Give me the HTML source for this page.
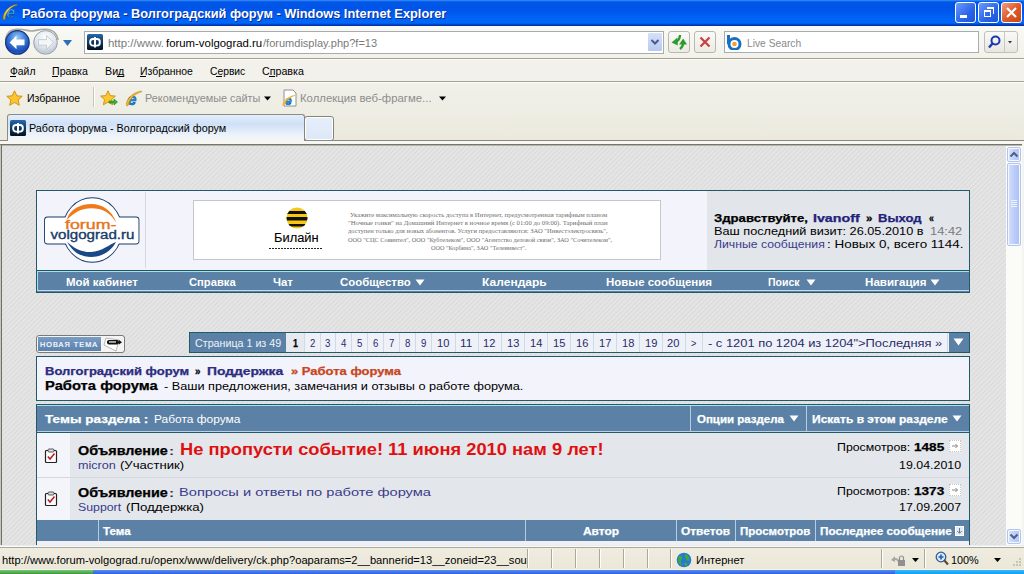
<!DOCTYPE html><html><head><meta charset="utf-8"><style>
html,body{margin:0;padding:0;width:1024px;height:574px;overflow:hidden;position:relative;background:#ece9d8;font-family:'Liberation Sans',sans-serif}
div{box-sizing:border-box}
.a{position:absolute}
</style></head><body>

<div class=a style="left:0px;top:0px;width:1024px;height:26px;background:linear-gradient(#3d95ff 0px,#1a6df0 1px,#0058e6 2px,#0053e8 7px,#0058ee 12px,#0063f5 18px,#0068f8 23px,#0050dc 24px,#0038b8 25px,#0030a8 26px)"></div>
<svg class=a style="left:0px;top:0px" width="20" height="22" viewBox="0 0 20 22">
<defs><linearGradient id="ieg" x1="0" y1="0" x2="0" y2="1"><stop offset="0" stop-color="#9ee8ff"/><stop offset="0.5" stop-color="#3aa8f0"/><stop offset="1" stop-color="#1a78d8"/></linearGradient>
<linearGradient id="iey" x1="0" y1="1" x2="1" y2="0"><stop offset="0" stop-color="#c89018"/><stop offset="0.5" stop-color="#f8e870"/><stop offset="1" stop-color="#d8a820"/></linearGradient></defs>
<text x="6.3" y="18" font-family="Liberation Sans" font-weight="bold" font-style="italic" font-size="16" fill="url(#ieg)" stroke="#0a4a98" stroke-width="0.6">e</text>
<path d="M3.2 19.5 C1.5 15 7.5 5.5 17 4.2 C17.5 4.8 17 5.5 16 5.6 C9 7.5 5.5 14 5.2 19 C4.8 20 3.8 20.2 3.2 19.5Z" fill="url(#iey)" stroke="#7a6010" stroke-width="0.5"/>
</svg>
<div style="position:absolute;left:22.20px;top:7px;font:bold 13.5px 'Liberation Sans', sans-serif;line-height:13.5px;color:#fff;white-space:nowrap;transform-origin:0 0;transform:scaleX(0.9481);text-shadow:1px 1px 0 #0a2a90">Работа форума - Волгоградский форум - Windows Internet Explorer</div>
<div class=a style="left:955px;top:2px;width:21px;height:21px;border:1px solid #fff;border-radius:3px;background:linear-gradient(135deg,#6c9cff,#2a64e8 60%,#1f55d8)"></div>
<div class=a style="left:960px;top:15px;width:7px;height:3px;background:#fff"></div>
<div class=a style="left:978px;top:2px;width:21px;height:21px;border:1px solid #fff;border-radius:3px;background:linear-gradient(135deg,#6c9cff,#2a64e8 60%,#1f55d8)"></div>
<div class=a style="left:984px;top:10px;width:7px;height:7px;border:1.5px solid #fff;border-top-width:2px"></div>
<div class=a style="left:987px;top:7px;width:7px;height:7px;border:1.5px solid #fff;border-top-width:2px;border-left:none;border-bottom:none"></div>
<div class=a style="left:1001px;top:2px;width:21px;height:21px;border:1px solid #fff;border-radius:3px;background:linear-gradient(135deg,#f0a080,#e05a2a 50%,#c84818)"></div>
<svg class=a style="left:1001px;top:2px" width="21" height="21"><path d="M6 6 L15 15 M15 6 L6 15" stroke="#fff" stroke-width="2.2"/></svg>
<div class=a style="left:0px;top:26px;width:1024px;height:32px;background:linear-gradient(#fafaf6,#f2f1ea)"></div>
<div class=a style="left:0px;top:58px;width:1024px;height:1px;background:#a4a294"></div>
<div class=a style="left:0px;top:59px;width:1024px;height:1px;background:#fdfdf6"></div>
<div class=a style="left:0px;top:60px;width:1024px;height:21px;background:#f2f1eb"></div>
<div class=a style="left:0px;top:81px;width:1024px;height:1px;background:#a4a294"></div>
<div class=a style="left:0px;top:82px;width:1024px;height:1px;background:#fdfdf6"></div>
<div class=a style="left:0px;top:83px;width:1024px;height:61px;background:linear-gradient(#f1f0e9,#eeede3 50%,#ebe9dc)"></div>
<svg class=a style="left:0px;top:26px" width="80" height="32" viewBox="0 0 80 32">
<defs>
<radialGradient id="bg1" cx="0.5" cy="0.3" r="0.75"><stop offset="0" stop-color="#9ccaf8"/><stop offset="0.45" stop-color="#3a7ad8"/><stop offset="0.8" stop-color="#1a4ab8"/><stop offset="1" stop-color="#2a90e8"/></radialGradient>
<radialGradient id="bg2" cx="0.5" cy="0.3" r="0.75"><stop offset="0" stop-color="#ffffff"/><stop offset="0.55" stop-color="#dfe6ee"/><stop offset="0.85" stop-color="#c0c8d4"/><stop offset="1" stop-color="#d8f0fa"/></radialGradient>
</defs>
<path d="M5.5 14 C6.5 7 11 3.2 17.5 3.2 C25 3.2 28 5 31.5 5 C35 5 38 3.2 45.5 3.2 C52 3.2 57 7 58 14" fill="none" stroke="#a8a8a4" stroke-width="1.6"/>
<circle cx="17.4" cy="16.4" r="11.8" fill="url(#bg1)" stroke="#163478" stroke-width="1.2"/>
<path d="M9.5 16.4 L16.5 9.5 L16.5 13.6 L24.5 13.6 L24.5 19.2 L16.5 19.2 L16.5 23.3 Z" fill="#fff"/>
<circle cx="45.5" cy="16.4" r="11.8" fill="url(#bg2)" stroke="#9aa0a8" stroke-width="1"/>
<path d="M53.5 16.4 L46.5 9.5 L46.5 13.6 L38.5 13.6 L38.5 19.2 L46.5 19.2 L46.5 23.3 Z" fill="#f4f6f8" stroke="#b8bcc4" stroke-width="0.7"/>
<path d="M63 14 L72 14 L67.5 20 Z" fill="#2a70b8"/>
</svg>
<div class=a style="left:84px;top:31px;width:580px;height:23px;background:#fff;border:1px solid #a5acb2"></div>
<svg class=a style="left:87px;top:34px" width="16" height="16" viewBox="0 0 16 16"><defs><linearGradient id="fg" x1="0" y1="0" x2="0" y2="1"><stop offset="0" stop-color="#2a68a8"/><stop offset="0.5" stop-color="#0e3a66"/><stop offset="1" stop-color="#050e1a"/></linearGradient></defs><rect width="16" height="16" rx="1.5" fill="url(#fg)"/><rect x="3.2" y="5" width="9.6" height="6.6" rx="2.8" fill="none" stroke="#fff" stroke-width="1.9"/><rect x="7" y="3" width="2" height="10.5" fill="#fff"/></svg>
<div style="position:absolute;left:108.00px;top:38px;font:normal 11px 'Liberation Sans', sans-serif;line-height:11px;color:#7a7a7a;white-space:nowrap;transform-origin:0 0;transform:scaleX(1.0420);">http://www.</div>
<div style="position:absolute;left:166.00px;top:38px;font:normal 11px 'Liberation Sans', sans-serif;line-height:11px;color:#000;white-space:nowrap;transform-origin:0 0;transform:scaleX(1.0343);">forum-volgograd.ru</div>
<div style="position:absolute;left:263.00px;top:38px;font:normal 11px 'Liberation Sans', sans-serif;line-height:11px;color:#7a7a7a;white-space:nowrap;transform-origin:0 0;transform:scaleX(1.0024);">/forumdisplay.php?f=13</div>
<div class=a style="left:648px;top:33px;width:14px;height:18px;background:linear-gradient(#d6e0fa,#b8c8f0);border-radius:1px"></div>
<svg class=a style="left:648px;top:33px" width="14" height="18"><path d="M3.5 7 L7 10.5 L10.5 7" stroke="#4a5a8a" stroke-width="2" fill="none"/></svg>
<div class=a style="left:668px;top:31px;width:22px;height:22px;border:1px solid #b8b8b0;border-radius:3px;background:linear-gradient(#fafaf8,#eceae4)"></div>
<svg class=a style="left:668px;top:31px" width="22" height="22"><path d="M3.5 11.5 L9.5 6.5 L9.8 14.5Z" fill="#2c9c2c"/><path d="M8.5 10.5 Q11.5 9.5 12 4" stroke="#2c9c2c" stroke-width="2.4" fill="none"/><path d="M11 13.5 L19 13.5 L15.2 7.5Z" fill="#2c9c2c"/><path d="M15.2 12.5 Q14.8 16 12 18" stroke="#2c9c2c" stroke-width="2.4" fill="none"/></svg>
<div class=a style="left:694px;top:31px;width:22px;height:22px;border:1px solid #b8b8b0;border-radius:3px;background:linear-gradient(#fafaf8,#eceae4)"></div>
<svg class=a style="left:694px;top:31px" width="22" height="22"><path d="M6.5 6.5 L15.5 15.5 M15.5 6.5 L6.5 15.5" stroke="#c84040" stroke-width="2.2"/></svg>
<div class=a style="left:724px;top:31px;width:255px;height:22px;background:#fff;border:1px solid #a5acb2"></div>
<svg class=a style="left:726px;top:34px" width="18" height="16" viewBox="0 0 18 16"><path d="M2.5 1 V10" stroke="#1a70c0" stroke-width="3"/><circle cx="8.5" cy="10" r="5.5" fill="none" stroke="#1a70c0" stroke-width="3"/><circle cx="8.5" cy="10" r="2.3" fill="#f0a030"/></svg>
<div style="position:absolute;left:747.00px;top:38px;font:normal 11px 'Liberation Sans', sans-serif;line-height:11px;color:#8a8a8a;white-space:nowrap;transform-origin:0 0;transform:scaleX(0.9315);">Live Search</div>
<div class=a style="left:984px;top:31px;width:34px;height:22px;border:1px solid #c0c0b8;border-radius:3px;background:linear-gradient(#fafaf8,#e8e6e0)"></div>
<div class=a style="left:1004px;top:32px;width:1px;height:20px;background:#c8c8c0"></div>
<svg class=a style="left:984px;top:31px" width="34" height="22"><circle cx="11.5" cy="9.5" r="4" fill="none" stroke="#1a3ab0" stroke-width="2"/><path d="M9 12 L5 16.5" stroke="#1a3ab0" stroke-width="2.5"/><path d="M24 10 L28 10 L26 12.5Z" fill="#335"/></svg>
<div style="position:absolute;left:10.00px;top:66px;font:normal 10.5px 'Liberation Sans', sans-serif;line-height:10.5px;color:#000;white-space:nowrap;transform-origin:0 0;transform:scaleX(0.9849);">Файл</div>
<div style="position:absolute;left:51.80px;top:66px;font:normal 10.5px 'Liberation Sans', sans-serif;line-height:10.5px;color:#000;white-space:nowrap;transform-origin:0 0;transform:scaleX(1.0104);">Правка</div>
<div style="position:absolute;left:104.80px;top:66px;font:normal 10.5px 'Liberation Sans', sans-serif;line-height:10.5px;color:#000;white-space:nowrap;transform-origin:0 0;transform:scaleX(1.0176);">Вид</div>
<div style="position:absolute;left:139.80px;top:66px;font:normal 10.5px 'Liberation Sans', sans-serif;line-height:10.5px;color:#000;white-space:nowrap;transform-origin:0 0;transform:scaleX(0.9930);">Избранное</div>
<div style="position:absolute;left:209.70px;top:66px;font:normal 10.5px 'Liberation Sans', sans-serif;line-height:10.5px;color:#000;white-space:nowrap;transform-origin:0 0;transform:scaleX(0.9802);">Сервис</div>
<div style="position:absolute;left:261.80px;top:66px;font:normal 10.5px 'Liberation Sans', sans-serif;line-height:10.5px;color:#000;white-space:nowrap;transform-origin:0 0;transform:scaleX(1.0157);">Справка</div>
<div class=a style="left:10px;top:76px;width:6px;height:1px;background:#000"></div>
<div class=a style="left:52px;top:76px;width:6px;height:1px;background:#000"></div>
<div class=a style="left:117px;top:76px;width:7px;height:1px;background:#000"></div>
<div class=a style="left:140px;top:76px;width:6px;height:1px;background:#000"></div>
<div class=a style="left:216px;top:76px;width:6px;height:1px;background:#000"></div>
<div class=a style="left:269px;top:76px;width:6px;height:1px;background:#000"></div>
<svg class=a style="left:6px;top:90px" width="17" height="17" viewBox="0 0 17 17"><path d="M8.5 0.8 L10.8 5.8 L16.2 6.3 L12.1 9.9 L13.3 15.3 L8.5 12.5 L3.7 15.3 L4.9 9.9 L0.8 6.3 L6.2 5.8Z" fill="#fcc630" stroke="#d08a10" stroke-width="0.9"/></svg>
<div style="position:absolute;left:26.70px;top:93px;font:normal 10.5px 'Liberation Sans', sans-serif;line-height:10.5px;color:#000;white-space:nowrap;transform-origin:0 0;transform:scaleX(0.9986);">Избранное</div>
<div class=a style="left:93px;top:87px;width:1px;height:20px;background:#c8c4b4"></div>
<div class=a style="left:94px;top:87px;width:1px;height:20px;background:#fff"></div>
<svg class=a style="left:100px;top:90px" width="18" height="17" viewBox="0 0 18 17"><path d="M8 0.8 L10.2 5.6 L15.4 6.1 L11.5 9.6 L12.6 14.8 L8 12.1 L3.4 14.8 L4.5 9.6 L0.6 6.1 L5.8 5.6Z" fill="#fcc630" stroke="#d08a10" stroke-width="0.9"/><path d="M9 11 H14 V9 L17.5 12 L14 15 V13 H9Z" fill="#3ab030" stroke="#1a8a1a" stroke-width="0.6"/></svg>
<svg class=a style="left:125px;top:89px" width="18" height="18" viewBox="0 0 18 18"><text x="2.5" y="15.5" font-family="Liberation Sans" font-weight="bold" font-style="italic" font-size="16" fill="#2a98e8" stroke="#0a50a8" stroke-width="0.6">e</text><path d="M1.5 16.5 C0 12 7 3 16.5 2 C17 2.6 16.5 3.2 15.5 3.3 C9 5 4.5 11 3.4 16 C3 17 2 17.2 1.5 16.5Z" fill="#f0b828" stroke="#a07010" stroke-width="0.4"/></svg>
<div style="position:absolute;left:144.70px;top:93px;font:normal 10.5px 'Liberation Sans', sans-serif;line-height:10.5px;color:#8d8d8d;white-space:nowrap;transform-origin:0 0;transform:scaleX(1.0317);">Рекомендуемые сайты</div>
<svg class=a style="left:263px;top:96px" width="9" height="5"><path d="M1 0.5 L8 0.5 L4.5 4.5Z" fill="#000"/></svg>
<svg class=a style="left:281px;top:89px" width="17" height="18" viewBox="0 0 17 18"><path d="M3 1 H12 L15 4 V17 H3Z" fill="#fff" stroke="#909090" stroke-width="1"/><text x="4" y="15.5" font-family="Liberation Sans" font-weight="bold" font-style="italic" font-size="12" fill="#2a98e8" stroke="#0a50a8" stroke-width="0.5">e</text><path d="M1.5 16.5 C1 13 7 7 14 6 C14.3 6.5 14 7 13.3 7.1 C8 9 4.5 12.5 3 16.5 C2.6 17.2 1.8 17.2 1.5 16.5Z" fill="#f0b828"/></svg>
<div style="position:absolute;left:300.00px;top:93px;font:normal 10.5px 'Liberation Sans', sans-serif;line-height:10.5px;color:#8d8d8d;white-space:nowrap;transform-origin:0 0;transform:scaleX(1.0827);">Коллекция веб-фрагме...</div>
<svg class=a style="left:438px;top:96px" width="9" height="5"><path d="M1 0.5 L8 0.5 L4.5 4.5Z" fill="#000"/></svg>
<div class=a style="left:7px;top:114px;width:298px;height:27px;border:1px solid #8c8c84;border-bottom:none;border-radius:3px 3px 0 0;background:linear-gradient(#e2eefc,#cfe0f6 35%,#eef4fb 80%,#f6f6f2 100%)"></div>
<svg class=a style="left:10px;top:120px" width="16" height="16" viewBox="0 0 16 16"><defs><linearGradient id="fg2" x1="0" y1="0" x2="0" y2="1"><stop offset="0" stop-color="#2a68a8"/><stop offset="0.5" stop-color="#0e3a66"/><stop offset="1" stop-color="#050e1a"/></linearGradient></defs><rect width="16" height="16" rx="1.5" fill="url(#fg2)"/><rect x="3.2" y="5" width="9.6" height="6.6" rx="2.8" fill="none" stroke="#fff" stroke-width="1.9"/><rect x="7" y="3" width="2" height="10.5" fill="#fff"/></svg>
<div style="position:absolute;left:29.00px;top:123px;font:normal 10.5px 'Liberation Sans', sans-serif;line-height:10.5px;color:#000;white-space:nowrap;transform-origin:0 0;transform:scaleX(1.0264);">Работа форума - Волгоградский форум</div>
<div class=a style="left:304px;top:116px;width:30px;height:25px;border:1px solid #84847c;border-radius:3px;background:linear-gradient(#e6eefa,#dce8f8);box-shadow:inset 0 0 0 1px #fff"></div>
<div class=a style="left:0px;top:140px;width:7px;height:1px;background:#8c8a80"></div>
<div class=a style="left:305px;top:140px;width:719px;height:1px;background:#8c8a80"></div>
<div class=a style="left:0px;top:141px;width:1024px;height:3px;background:#f6f6f2"></div>
<div class=a style="left:0px;top:144px;width:1024px;height:1px;background:#76766e"></div>
<div class=a style="left:0px;top:145px;width:1024px;height:1px;background:#b4b4ac"></div>
<div class=a style="left:0px;top:146px;width:1006px;height:399px;background:repeating-linear-gradient(135deg,#e4e4e4 0px,#e4e4e4 1.8px,#d8d8d8 2.6px,#e4e4e4 3.4px)"></div>
<div class=a style="left:0px;top:145px;width:1px;height:400px;background:#c8c6bc"></div>
<div class=a style="left:1px;top:145px;width:1px;height:400px;background:#6e6e6a"></div>
<div class=a style="left:1006px;top:146px;width:16px;height:399px;background:#fbfbf7"></div>
<div class=a style="left:1022px;top:142px;width:2px;height:403px;background:#f4f4f0"></div>
<div class=a style="left:1007px;top:147px;width:14px;height:15px;border:1px solid #b4c4ec;border-radius:2px;background:linear-gradient(90deg,#dce6fe,#c0d0fa 50%,#b0c4f6);box-shadow:inset 0 0 0 1px #f4f8ff"></div>
<svg class=a style="left:1007px;top:147px" width="14" height="15"><path d="M3.5 9.5 L7 6 L10.5 9.5" stroke="#4d6185" stroke-width="2" fill="none"/></svg>
<div class=a style="left:1007px;top:163px;width:14px;height:83px;border:1px solid #b4c4ec;border-radius:2px;background:linear-gradient(90deg,#d4e0fe,#bccdfa 50%,#acc0f4);box-shadow:inset 0 0 0 1px #f4f8ff"></div>
<div class=a style="left:1011px;top:200px;width:6px;height:1px;background:#eef2fe"></div>
<div class=a style="left:1011px;top:202px;width:6px;height:1px;background:#eef2fe"></div>
<div class=a style="left:1011px;top:204px;width:6px;height:1px;background:#eef2fe"></div>
<div class=a style="left:1011px;top:206px;width:6px;height:1px;background:#eef2fe"></div>
<div class=a style="left:1007px;top:529px;width:14px;height:15px;border:1px solid #b4c4ec;border-radius:2px;background:linear-gradient(90deg,#dce6fe,#c0d0fa 50%,#b0c4f6);box-shadow:inset 0 0 0 1px #f4f8ff"></div>
<svg class=a style="left:1007px;top:529px" width="14" height="15"><path d="M3.5 5.5 L7 9 L10.5 5.5" stroke="#4d6185" stroke-width="2" fill="none"/></svg>
<div class=a style="left:36px;top:190px;width:934px;height:103px;border:1px solid #235a6a;background:#f3f3fb"></div>
<div class=a style="left:145px;top:192px;width:1px;height:76px;background:#d8d8e0"></div>
<div class=a style="left:707px;top:191px;width:262px;height:79px;background:#e2e5ea"></div>
<div class=a style="left:193px;top:200px;width:468px;height:60px;background:#fff;border:1px solid #c6c6cc"></div>
<div class=a style="left:37px;top:270px;width:932px;height:22px;background:#5b81a6;border-top:1px solid #1e5560;"></div>
<div class=a style="left:37px;top:271px;width:932px;height:1px;background:#a8e0f0"></div>
<div class=a style="left:37px;top:290px;width:932px;height:1px;background:#c8d8ee"></div>
<div class=a style="left:37px;top:271px;width:1px;height:20px;background:#a8e0f0"></div>
<div style="position:absolute;left:66.40px;top:277px;font:bold 11px 'Liberation Sans', sans-serif;line-height:11px;color:#fff;white-space:nowrap;transform-origin:0 0;transform:scaleX(1.0446);">Мой кабинет</div>
<div style="position:absolute;left:188.70px;top:277px;font:bold 11px 'Liberation Sans', sans-serif;line-height:11px;color:#fff;white-space:nowrap;transform-origin:0 0;transform:scaleX(1.0194);">Справка</div>
<div style="position:absolute;left:273.40px;top:277px;font:bold 11px 'Liberation Sans', sans-serif;line-height:11px;color:#fff;white-space:nowrap;transform-origin:0 0;transform:scaleX(1.0380);">Чат</div>
<div style="position:absolute;left:340.00px;top:277px;font:bold 11px 'Liberation Sans', sans-serif;line-height:11px;color:#fff;white-space:nowrap;transform-origin:0 0;transform:scaleX(1.0357);">Сообщество</div>
<div style="position:absolute;left:481.50px;top:277px;font:bold 11px 'Liberation Sans', sans-serif;line-height:11px;color:#fff;white-space:nowrap;transform-origin:0 0;transform:scaleX(1.0945);">Календарь</div>
<div style="position:absolute;left:606.00px;top:277px;font:bold 11px 'Liberation Sans', sans-serif;line-height:11px;color:#fff;white-space:nowrap;transform-origin:0 0;transform:scaleX(1.0430);">Новые сообщения</div>
<div style="position:absolute;left:768.40px;top:277px;font:bold 11px 'Liberation Sans', sans-serif;line-height:11px;color:#fff;white-space:nowrap;transform-origin:0 0;transform:scaleX(0.9551);">Поиск</div>
<div style="position:absolute;left:865.40px;top:277px;font:bold 11px 'Liberation Sans', sans-serif;line-height:11px;color:#fff;white-space:nowrap;transform-origin:0 0;transform:scaleX(1.0552);">Навигация</div>
<svg class=a style="left:415px;top:279px" width="10" height="7"><path d="M0.5 0.5 L9.5 0.5 L5 6.5Z" fill="#fff"/></svg>
<svg class=a style="left:805.5px;top:279px" width="10" height="7"><path d="M0.5 0.5 L9.5 0.5 L5 6.5Z" fill="#fff"/></svg>
<svg class=a style="left:930px;top:279px" width="10" height="7"><path d="M0.5 0.5 L9.5 0.5 L5 6.5Z" fill="#fff"/></svg>
<svg class=a style="left:40px;top:192px" width="105" height="76" viewBox="0 0 105 76">
<ellipse cx="52.3" cy="38" rx="29.3" ry="31.8" fill="none" stroke="#163a6a" stroke-width="1.8"/>
<rect x="5" y="25.5" width="93.5" height="26" rx="2.5" fill="none" stroke="#163a6a" stroke-width="1.8"/>
<ellipse cx="52.3" cy="38" rx="29.3" ry="31.8" fill="#fff"/>
<rect x="5" y="25.5" width="93.5" height="26" rx="2.5" fill="#fff"/>
<path d="M26.6 28 C30 16 42 12 51.2 12 C62 12 72 18 76.4 31 C70 20 62 16.3 51.2 16.3 C42 16.3 35 20 26.6 28 Z" fill="#ee7a1c"/>
<path d="M27 49.4 C33 61 42 65 51 65 C63 65 72 58 76 50 C70 52 62 59.5 51 60 C42 60.3 33 56 27 49.4 Z" fill="#1a4a86"/>
<text x="25" y="37.3" font-family="Liberation Sans" font-size="12.5" fill="#e8741a" stroke="#e8741a" stroke-width="0.35" textLength="51.5" lengthAdjust="spacingAndGlyphs">forum-</text>
<text x="10.5" y="47" font-family="Liberation Sans" font-size="12.5" fill="#163a6a" stroke="#163a6a" stroke-width="0.35" textLength="84" lengthAdjust="spacingAndGlyphs">volgograd.ru</text>
</svg>
<svg class=a style="left:280px;top:205px" width="46" height="46" viewBox="0 0 46 46">
<defs><clipPath id="bc"><circle cx="17" cy="13" r="10.5"/></clipPath></defs>
<circle cx="17" cy="13" r="10.5" fill="#f8c810"/>
<g clip-path="url(#bc)"><rect x="0" y="6" width="40" height="3" fill="#111"/><rect x="0" y="12" width="40" height="3.5" fill="#111"/><rect x="0" y="19" width="40" height="2.5" fill="#111"/></g>
</svg>
<div style="position:absolute;left:274.00px;top:232px;font:normal 12px 'Liberation Sans', sans-serif;line-height:12px;color:#000;white-space:nowrap;transform-origin:0 0;transform:scaleX(1.0743);-webkit-text-stroke:0.1px #000;">Билайн</div>
<div class=a style="left:269px;top:248px;width:54px;height:1px;background:repeating-linear-gradient(90deg,#222 0 2px,transparent 2px 3px)"></div>
<div style="position:absolute;left:350.00px;top:212px;font:normal 6.5px 'Liberation Serif', serif;line-height:6.5px;color:#6e6e6e;white-space:nowrap;transform-origin:0 0;transform:scaleX(1.0211);">Укажите максимальную скорость доступа в Интернет, предусмотренная тарифным планом</div>
<div style="position:absolute;left:348.00px;top:220px;font:normal 6.5px 'Liberation Serif', serif;line-height:6.5px;color:#6e6e6e;white-space:nowrap;transform-origin:0 0;transform:scaleX(1.0268);">&quot;Ночные гонки&quot; на Домашний Интернет в ночное время (с 01:00 до 09:00). Тарифный план</div>
<div style="position:absolute;left:347.60px;top:228px;font:normal 6.5px 'Liberation Serif', serif;line-height:6.5px;color:#6e6e6e;white-space:nowrap;transform-origin:0 0;transform:scaleX(1.0075);">доступен только для новых абонентов. Услуги предоставляются: ЗАО &quot;Инвестэлектросвязь&quot;,</div>
<div style="position:absolute;left:347.60px;top:236.5px;font:normal 6.5px 'Liberation Serif', serif;line-height:6.5px;color:#6e6e6e;white-space:nowrap;transform-origin:0 0;transform:scaleX(0.9682);">ООО &quot;СЦС Совинтел&quot;, ООО &quot;Кубтелеком&quot;, ООО &quot;Агентство деловой связи&quot;, ЗАО &quot;Сочителеком&quot;,</div>
<div style="position:absolute;left:430.50px;top:245px;font:normal 6.5px 'Liberation Serif', serif;line-height:6.5px;color:#6e6e6e;white-space:nowrap;transform-origin:0 0;transform:scaleX(0.9516);">ООО &quot;Корбина&quot;, ЗАО &quot;Телеинвест&quot;.</div>
<div style="position:absolute;left:714.30px;top:213px;font:bold 10.5px 'Liberation Sans', sans-serif;line-height:10.5px;color:#000;white-space:nowrap;transform-origin:0 0;transform:scaleX(1.2510);-webkit-text-stroke:0.25px #000;">Здравствуйте,</div>
<div style="position:absolute;left:813.30px;top:213px;font:bold 10.5px 'Liberation Sans', sans-serif;line-height:10.5px;color:#22227a;white-space:nowrap;transform-origin:0 0;transform:scaleX(1.3545);-webkit-text-stroke:0.25px #22227a;">Ivanoff</div>
<div style="position:absolute;left:866.40px;top:213px;font:bold 10.5px 'Liberation Sans', sans-serif;line-height:10.5px;color:#000;white-space:nowrap;transform-origin:0 0;transform:scaleX(1.1000);-webkit-text-stroke:0.25px #000;">»</div>
<div style="position:absolute;left:878.00px;top:213px;font:bold 10.5px 'Liberation Sans', sans-serif;line-height:10.5px;color:#22227a;white-space:nowrap;transform-origin:0 0;transform:scaleX(1.2428);-webkit-text-stroke:0.25px #22227a;">Выход</div>
<div style="position:absolute;left:928.70px;top:213px;font:bold 10.5px 'Liberation Sans', sans-serif;line-height:10.5px;color:#000;white-space:nowrap;transform-origin:0 0;transform:scaleX(0.8333);-webkit-text-stroke:0.25px #000;">«</div>
<div style="position:absolute;left:714.00px;top:226px;font:normal 10.5px 'Liberation Sans', sans-serif;line-height:10.5px;color:#000;white-space:nowrap;transform-origin:0 0;transform:scaleX(1.2104);">Ваш последний визит: 26.05.2010 в</div>
<div style="position:absolute;left:929.60px;top:226px;font:normal 10.5px 'Liberation Sans', sans-serif;line-height:10.5px;color:#7a7a7a;white-space:nowrap;transform-origin:0 0;transform:scaleX(1.2256);">14:42</div>
<div style="position:absolute;left:714.00px;top:239px;font:normal 10.5px 'Liberation Sans', sans-serif;line-height:10.5px;color:#3a3a8a;white-space:nowrap;transform-origin:0 0;transform:scaleX(1.1651);">Личные сообщения</div>
<div style="position:absolute;left:826.70px;top:239px;font:normal 10.5px 'Liberation Sans', sans-serif;line-height:10.5px;color:#000;white-space:nowrap;transform-origin:0 0;transform:scaleX(1.2799);">: Новых 0, всего 1144.</div>
<div class=a style="left:36px;top:335px;width:89px;height:18px;border:1px solid #7a7a7a;border-radius:3px;background:#f4f4f4"></div>
<div class=a style="left:38px;top:337px;width:63px;height:14px;background:linear-gradient(#7a9cc4,#5c82ae)"></div>
<div style="position:absolute;left:40.00px;top:340.5px;font:normal 7px 'Liberation Sans', sans-serif;line-height:7px;color:#fff;white-space:nowrap;transform-origin:0 0;transform:scaleX(1.0383);-webkit-text-stroke:0.2px #fff;letter-spacing:1px;">НОВАЯ ТЕМА</div>
<svg class=a style="left:102px;top:336px" width="22" height="16" viewBox="0 0 22 16"><path d="M4 2 L17 4 L14 15 L2 9Z" fill="#fff" stroke="#999" stroke-width="0.7"/><rect x="5" y="4" width="12" height="4.5" rx="2" fill="#111"/><path d="M17 4 L20 6.25 L17 8.5Z" fill="#111"/><rect x="7" y="5.2" width="7" height="1.5" fill="#ccc"/></svg>
<div class=a style="left:189px;top:332px;width:781px;height:21px;border:1px solid #235a6a;background:#eef2f8"></div>
<div class=a style="left:190px;top:333px;width:96px;height:19px;background:#5b81a6"></div>
<div style="position:absolute;left:194.70px;top:338px;font:normal 10.5px 'Liberation Sans', sans-serif;line-height:10.5px;color:#f0f4fa;white-space:nowrap;transform-origin:0 0;transform:scaleX(1.0189);">Страница 1 из 49</div>
<div class=a style="left:286px;top:333px;width:18px;height:19px;background:#e6e9ee"></div>
<div style="position:absolute;left:292.50px;top:338px;font:bold 10.5px 'Liberation Sans', sans-serif;line-height:10.5px;color:#000;white-space:nowrap;transform-origin:0 0;transform:scaleX(0.8500);-webkit-text-stroke:0.25px #000;">1</div>
<div class=a style="left:304px;top:333px;width:1px;height:19px;background:#d0dae4"></div>
<div class=a style="left:320px;top:333px;width:1px;height:19px;background:#d0dae4"></div>
<div class=a style="left:335px;top:333px;width:1px;height:19px;background:#d0dae4"></div>
<div class=a style="left:351px;top:333px;width:1px;height:19px;background:#d0dae4"></div>
<div class=a style="left:367px;top:333px;width:1px;height:19px;background:#d0dae4"></div>
<div class=a style="left:383px;top:333px;width:1px;height:19px;background:#d0dae4"></div>
<div class=a style="left:399px;top:333px;width:1px;height:19px;background:#d0dae4"></div>
<div class=a style="left:415px;top:333px;width:1px;height:19px;background:#d0dae4"></div>
<div class=a style="left:431px;top:333px;width:1px;height:19px;background:#d0dae4"></div>
<div class=a style="left:455px;top:333px;width:1px;height:19px;background:#d0dae4"></div>
<div class=a style="left:478px;top:333px;width:1px;height:19px;background:#d0dae4"></div>
<div class=a style="left:501px;top:333px;width:1px;height:19px;background:#d0dae4"></div>
<div class=a style="left:524px;top:333px;width:1px;height:19px;background:#d0dae4"></div>
<div class=a style="left:547px;top:333px;width:1px;height:19px;background:#d0dae4"></div>
<div class=a style="left:570px;top:333px;width:1px;height:19px;background:#d0dae4"></div>
<div class=a style="left:593px;top:333px;width:1px;height:19px;background:#d0dae4"></div>
<div class=a style="left:616px;top:333px;width:1px;height:19px;background:#d0dae4"></div>
<div class=a style="left:639px;top:333px;width:1px;height:19px;background:#d0dae4"></div>
<div class=a style="left:662px;top:333px;width:1px;height:19px;background:#d0dae4"></div>
<div class=a style="left:685px;top:333px;width:1px;height:19px;background:#d0dae4"></div>
<div class=a style="left:702px;top:333px;width:1px;height:19px;background:#d0dae4"></div>
<div class=a style="left:947px;top:333px;width:1px;height:19px;background:#d0dae4"></div>
<div style="position:absolute;left:309.60px;top:338px;font:normal 10.5px 'Liberation Sans', sans-serif;line-height:10.5px;color:#2a2a6a;white-space:nowrap;transform-origin:0 0;transform:scaleX(0.9167);">2</div>
<div style="position:absolute;left:325.30px;top:338px;font:normal 10.5px 'Liberation Sans', sans-serif;line-height:10.5px;color:#2a2a6a;white-space:nowrap;transform-origin:0 0;transform:scaleX(0.9167);">3</div>
<div style="position:absolute;left:341.15px;top:338px;font:normal 10.5px 'Liberation Sans', sans-serif;line-height:10.5px;color:#2a2a6a;white-space:nowrap;transform-origin:0 0;transform:scaleX(0.9167);">4</div>
<div style="position:absolute;left:357.15px;top:338px;font:normal 10.5px 'Liberation Sans', sans-serif;line-height:10.5px;color:#2a2a6a;white-space:nowrap;transform-origin:0 0;transform:scaleX(0.9167);">5</div>
<div style="position:absolute;left:373.00px;top:338px;font:normal 10.5px 'Liberation Sans', sans-serif;line-height:10.5px;color:#2a2a6a;white-space:nowrap;transform-origin:0 0;transform:scaleX(0.9167);">6</div>
<div style="position:absolute;left:388.75px;top:338px;font:normal 10.5px 'Liberation Sans', sans-serif;line-height:10.5px;color:#2a2a6a;white-space:nowrap;transform-origin:0 0;transform:scaleX(0.9167);">7</div>
<div style="position:absolute;left:404.65px;top:338px;font:normal 10.5px 'Liberation Sans', sans-serif;line-height:10.5px;color:#2a2a6a;white-space:nowrap;transform-origin:0 0;transform:scaleX(0.9167);">8</div>
<div style="position:absolute;left:420.70px;top:338px;font:normal 10.5px 'Liberation Sans', sans-serif;line-height:10.5px;color:#2a2a6a;white-space:nowrap;transform-origin:0 0;transform:scaleX(0.9167);">9</div>
<div style="position:absolute;left:437.10px;top:338px;font:normal 10.5px 'Liberation Sans', sans-serif;line-height:10.5px;color:#2a2a6a;white-space:nowrap;transform-origin:0 0;transform:scaleX(1.0558);">10</div>
<div style="position:absolute;left:460.45px;top:338px;font:normal 10.5px 'Liberation Sans', sans-serif;line-height:10.5px;color:#2a2a6a;white-space:nowrap;transform-origin:0 0;transform:scaleX(1.1302);">11</div>
<div style="position:absolute;left:483.45px;top:338px;font:normal 10.5px 'Liberation Sans', sans-serif;line-height:10.5px;color:#2a2a6a;white-space:nowrap;transform-origin:0 0;transform:scaleX(1.0558);">12</div>
<div style="position:absolute;left:506.55px;top:338px;font:normal 10.5px 'Liberation Sans', sans-serif;line-height:10.5px;color:#2a2a6a;white-space:nowrap;transform-origin:0 0;transform:scaleX(1.0558);">13</div>
<div style="position:absolute;left:529.65px;top:338px;font:normal 10.5px 'Liberation Sans', sans-serif;line-height:10.5px;color:#2a2a6a;white-space:nowrap;transform-origin:0 0;transform:scaleX(1.0558);">14</div>
<div style="position:absolute;left:552.65px;top:338px;font:normal 10.5px 'Liberation Sans', sans-serif;line-height:10.5px;color:#2a2a6a;white-space:nowrap;transform-origin:0 0;transform:scaleX(1.0558);">15</div>
<div style="position:absolute;left:575.60px;top:338px;font:normal 10.5px 'Liberation Sans', sans-serif;line-height:10.5px;color:#2a2a6a;white-space:nowrap;transform-origin:0 0;transform:scaleX(1.0558);">16</div>
<div style="position:absolute;left:598.55px;top:338px;font:normal 10.5px 'Liberation Sans', sans-serif;line-height:10.5px;color:#2a2a6a;white-space:nowrap;transform-origin:0 0;transform:scaleX(1.0558);">17</div>
<div style="position:absolute;left:621.55px;top:338px;font:normal 10.5px 'Liberation Sans', sans-serif;line-height:10.5px;color:#2a2a6a;white-space:nowrap;transform-origin:0 0;transform:scaleX(1.0558);">18</div>
<div style="position:absolute;left:644.50px;top:338px;font:normal 10.5px 'Liberation Sans', sans-serif;line-height:10.5px;color:#2a2a6a;white-space:nowrap;transform-origin:0 0;transform:scaleX(1.0558);">19</div>
<div style="position:absolute;left:667.45px;top:338px;font:normal 10.5px 'Liberation Sans', sans-serif;line-height:10.5px;color:#2a2a6a;white-space:nowrap;transform-origin:0 0;transform:scaleX(1.0558);">20</div>
<div style="position:absolute;left:691.25px;top:338px;font:normal 10.5px 'Liberation Sans', sans-serif;line-height:10.5px;color:#2a2a6a;white-space:nowrap;transform-origin:0 0;transform:scaleX(0.8667);">></div>
<div style="position:absolute;left:707.80px;top:338px;font:normal 10.5px 'Liberation Sans', sans-serif;line-height:10.5px;color:#2a2a6a;white-space:nowrap;transform-origin:0 0;transform:scaleX(1.2274);">- с 1201 по 1204 из 1204&quot;&gt;Последняя »</div>
<div class=a style="left:949px;top:333px;width:20px;height:19px;background:#5b81a6"></div>
<svg class=a style="left:953px;top:338px" width="11" height="8"><path d="M0.5 0.5 L10.5 0.5 L5.5 7.5Z" fill="#fff"/></svg>
<div class=a style="left:36px;top:356px;width:934px;height:45px;border:1px solid #235a6a;background:#f2f3fb"></div>
<div style="position:absolute;left:45.00px;top:367px;font:bold 10px 'Liberation Sans', sans-serif;line-height:10px;color:#2c2c80;white-space:nowrap;transform-origin:0 0;transform:scaleX(1.3007);-webkit-text-stroke:0.25px #2c2c80;">Волгоградский форум</div>
<div style="position:absolute;left:195.40px;top:367px;font:bold 10px 'Liberation Sans', sans-serif;line-height:10px;color:#000;white-space:nowrap;transform-origin:0 0;transform:scaleX(0.9833);-webkit-text-stroke:0.25px #000;">»</div>
<div style="position:absolute;left:207.00px;top:367px;font:bold 10px 'Liberation Sans', sans-serif;line-height:10px;color:#2c2c80;white-space:nowrap;transform-origin:0 0;transform:scaleX(1.3840);-webkit-text-stroke:0.25px #2c2c80;">Поддержка</div>
<div style="position:absolute;left:291.40px;top:367px;font:bold 10px 'Liberation Sans', sans-serif;line-height:10px;color:#c8461e;white-space:nowrap;transform-origin:0 0;transform:scaleX(1.2995);-webkit-text-stroke:0.25px #c8461e;">» Работа форума</div>
<div style="position:absolute;left:45.00px;top:380px;font:bold 12px 'Liberation Sans', sans-serif;line-height:12px;color:#000;white-space:nowrap;transform-origin:0 0;transform:scaleX(1.2293);-webkit-text-stroke:0.25px #000;">Работа форума</div>
<div style="position:absolute;left:164.40px;top:381px;font:normal 10.5px 'Liberation Sans', sans-serif;line-height:10.5px;color:#000;white-space:nowrap;transform-origin:0 0;transform:scaleX(1.2097);">- Ваши предложения, замечания и отзывы о работе форума.</div>
<div class=a style="left:36px;top:404px;width:934px;height:145px;border:1px solid #235a6a;border-bottom:none;background:#e3e6ea"></div>
<div class=a style="left:37px;top:405px;width:932px;height:28px;background:#5b81a6;border-top:1px solid #a8e0f0;border-bottom:1px solid #235a6a"></div>
<div class=a style="left:37px;top:431px;width:932px;height:1px;background:#b8d0e8"></div>
<div style="position:absolute;left:45.30px;top:414px;font:bold 10.5px 'Liberation Sans', sans-serif;line-height:10.5px;color:#fff;white-space:nowrap;transform-origin:0 0;transform:scaleX(1.2874);-webkit-text-stroke:0.25px #fff;">Темы раздела :</div>
<div style="position:absolute;left:153.50px;top:414px;font:normal 10.5px 'Liberation Sans', sans-serif;line-height:10.5px;color:#fff;white-space:nowrap;transform-origin:0 0;transform:scaleX(1.1364);">Работа форума</div>
<div class=a style="left:690px;top:406px;width:1px;height:25px;background:#b8cce0"></div>
<div class=a style="left:806px;top:406px;width:1px;height:25px;background:#b8cce0"></div>
<div style="position:absolute;left:697.30px;top:414px;font:bold 10.5px 'Liberation Sans', sans-serif;line-height:10.5px;color:#fff;white-space:nowrap;transform-origin:0 0;transform:scaleX(1.0934);-webkit-text-stroke:0.25px #fff;">Опции раздела</div>
<div style="position:absolute;left:812.00px;top:414px;font:bold 10.5px 'Liberation Sans', sans-serif;line-height:10.5px;color:#fff;white-space:nowrap;transform-origin:0 0;transform:scaleX(1.1447);-webkit-text-stroke:0.25px #fff;">Искать в этом разделе</div>
<svg class=a style="left:788.5px;top:415px" width="10" height="7"><path d="M0.5 0.5 L9.5 0.5 L5 6.5Z" fill="#fff"/></svg>
<svg class=a style="left:952px;top:415px" width="10" height="7"><path d="M0.5 0.5 L9.5 0.5 L5 6.5Z" fill="#fff"/></svg>
<div class=a style="left:37px;top:433px;width:33px;height:87px;background:#f4f5fa"></div>
<div class=a style="left:37px;top:477px;width:932px;height:1px;background:#d4d8de"></div>
<svg class=a style="left:44px;top:448px" width="14" height="15" viewBox="0 0 14 15"><rect x="1.5" y="2.5" width="11" height="12" rx="1" fill="#fff" stroke="#222" stroke-width="1.2"/><rect x="4" y="1" width="6" height="3" rx="1" fill="#ddd" stroke="#333" stroke-width="0.8"/><path d="M3.8 8.5 L6 11 L10.5 5.5" stroke="#c01818" stroke-width="1.5" fill="none"/></svg>
<svg class=a style="left:44px;top:491px" width="14" height="15" viewBox="0 0 14 15"><rect x="1.5" y="2.5" width="11" height="12" rx="1" fill="#fff" stroke="#222" stroke-width="1.2"/><rect x="4" y="1" width="6" height="3" rx="1" fill="#ddd" stroke="#333" stroke-width="0.8"/><path d="M3.8 8.5 L6 11 L10.5 5.5" stroke="#c01818" stroke-width="1.5" fill="none"/></svg>
<div style="position:absolute;left:77.60px;top:445px;font:bold 12px 'Liberation Sans', sans-serif;line-height:12px;color:#000;white-space:nowrap;transform-origin:0 0;transform:scaleX(1.1976);-webkit-text-stroke:0.25px #000;">Объявление</div>
<div style="position:absolute;left:168.90px;top:446px;font:bold 11px 'Liberation Sans', sans-serif;line-height:11px;color:#333;white-space:nowrap;transform-origin:0 0;transform:scaleX(1.4000);">:</div>
<div style="position:absolute;left:179.89px;top:441px;font:bold 16.5px 'Liberation Sans', sans-serif;line-height:16.5px;color:#e01010;white-space:nowrap;transform-origin:0 0;transform:scaleX(1.1095);">Не пропусти событие! 11 июня 2010 нам 9 лет!</div>
<div style="position:absolute;left:77.60px;top:460px;font:normal 10.5px 'Liberation Sans', sans-serif;line-height:10.5px;color:#3a3a8a;white-space:nowrap;transform-origin:0 0;transform:scaleX(1.2000);">micron</div>
<div style="position:absolute;left:119.50px;top:460px;font:normal 10.5px 'Liberation Sans', sans-serif;line-height:10.5px;color:#000;white-space:nowrap;transform-origin:0 0;transform:scaleX(1.2502);">(Участник)</div>
<div style="position:absolute;left:836.50px;top:442px;font:normal 10.5px 'Liberation Sans', sans-serif;line-height:10.5px;color:#000;white-space:nowrap;transform-origin:0 0;transform:scaleX(1.1765);">Просмотров:</div>
<div style="position:absolute;left:914.00px;top:442px;font:bold 10.5px 'Liberation Sans', sans-serif;line-height:10.5px;color:#000;white-space:nowrap;transform-origin:0 0;transform:scaleX(1.2926);-webkit-text-stroke:0.25px #000;">1485</div>
<div class=a style="left:949px;top:440px;width:12px;height:12px;background:#fff;border:1px dotted #c8c8c8"></div>
<svg class=a style="left:949px;top:440px" width="12" height="12"><path d="M3 6 H8.5 M6.5 4 L8.5 6 L6.5 8" stroke="#888" stroke-width="1" fill="none"/></svg>
<div style="position:absolute;left:898.70px;top:460px;font:normal 10.5px 'Liberation Sans', sans-serif;line-height:10.5px;color:#000;white-space:nowrap;transform-origin:0 0;transform:scaleX(1.1819);">19.04.2010</div>
<div style="position:absolute;left:77.60px;top:487px;font:bold 12px 'Liberation Sans', sans-serif;line-height:12px;color:#000;white-space:nowrap;transform-origin:0 0;transform:scaleX(1.1976);-webkit-text-stroke:0.25px #000;">Объявление</div>
<div style="position:absolute;left:168.90px;top:488px;font:bold 11px 'Liberation Sans', sans-serif;line-height:11px;color:#333;white-space:nowrap;transform-origin:0 0;transform:scaleX(1.4000);">:</div>
<div style="position:absolute;left:179.30px;top:487px;font:normal 11.5px 'Liberation Sans', sans-serif;line-height:11.5px;color:#3a3a8a;white-space:nowrap;transform-origin:0 0;transform:scaleX(1.2713);">Вопросы и ответы по работе форума</div>
<div style="position:absolute;left:77.60px;top:502px;font:normal 10.5px 'Liberation Sans', sans-serif;line-height:10.5px;color:#3a3a8a;white-space:nowrap;transform-origin:0 0;transform:scaleX(1.1721);">Support</div>
<div style="position:absolute;left:125.90px;top:502px;font:normal 10.5px 'Liberation Sans', sans-serif;line-height:10.5px;color:#000;white-space:nowrap;transform-origin:0 0;transform:scaleX(1.2632);">(Поддержка)</div>
<div style="position:absolute;left:836.50px;top:486px;font:normal 10.5px 'Liberation Sans', sans-serif;line-height:10.5px;color:#000;white-space:nowrap;transform-origin:0 0;transform:scaleX(1.1765);">Просмотров:</div>
<div style="position:absolute;left:914.00px;top:486px;font:bold 10.5px 'Liberation Sans', sans-serif;line-height:10.5px;color:#000;white-space:nowrap;transform-origin:0 0;transform:scaleX(1.2926);-webkit-text-stroke:0.25px #000;">1373</div>
<div class=a style="left:949px;top:484px;width:12px;height:12px;background:#fff;border:1px dotted #c8c8c8"></div>
<svg class=a style="left:949px;top:484px" width="12" height="12"><path d="M3 6 H8.5 M6.5 4 L8.5 6 L6.5 8" stroke="#888" stroke-width="1" fill="none"/></svg>
<div style="position:absolute;left:898.70px;top:502px;font:normal 10.5px 'Liberation Sans', sans-serif;line-height:10.5px;color:#000;white-space:nowrap;transform-origin:0 0;transform:scaleX(1.1819);">17.09.2007</div>
<div class=a style="left:37px;top:520px;width:932px;height:21px;background:#5b81a6"></div>
<div class=a style="left:98px;top:520px;width:1px;height:21px;background:#b8cce0"></div>
<div class=a style="left:525px;top:520px;width:1px;height:21px;background:#b8cce0"></div>
<div class=a style="left:676px;top:520px;width:1px;height:21px;background:#b8cce0"></div>
<div class=a style="left:735px;top:520px;width:1px;height:21px;background:#b8cce0"></div>
<div class=a style="left:815px;top:520px;width:1px;height:21px;background:#b8cce0"></div>
<div style="position:absolute;left:103.20px;top:526px;font:bold 10.5px 'Liberation Sans', sans-serif;line-height:10.5px;color:#fff;white-space:nowrap;transform-origin:0 0;transform:scaleX(1.1023);-webkit-text-stroke:0.25px #fff;">Тема</div>
<div style="position:absolute;left:583.00px;top:526px;font:bold 10.5px 'Liberation Sans', sans-serif;line-height:10.5px;color:#fff;white-space:nowrap;transform-origin:0 0;transform:scaleX(1.1368);-webkit-text-stroke:0.25px #fff;">Автор</div>
<div style="position:absolute;left:681.00px;top:526px;font:bold 10.5px 'Liberation Sans', sans-serif;line-height:10.5px;color:#fff;white-space:nowrap;transform-origin:0 0;transform:scaleX(1.1361);-webkit-text-stroke:0.25px #fff;">Ответов</div>
<div style="position:absolute;left:740.00px;top:526px;font:bold 10.5px 'Liberation Sans', sans-serif;line-height:10.5px;color:#fff;white-space:nowrap;transform-origin:0 0;transform:scaleX(1.0952);-webkit-text-stroke:0.25px #fff;">Просмотров</div>
<div style="position:absolute;left:820.00px;top:526px;font:bold 10.5px 'Liberation Sans', sans-serif;line-height:10.5px;color:#fff;white-space:nowrap;transform-origin:0 0;transform:scaleX(1.1159);-webkit-text-stroke:0.25px #fff;">Последнее сообщение</div>
<div class=a style="left:955px;top:526px;width:9px;height:10px;background:#e4eaf2;border:1px solid #fff"></div>
<svg class=a style="left:955px;top:526px" width="9" height="10"><path d="M4.5 2 V7 M2.3 5 L4.5 7.3 L6.7 5" stroke="#6a7a90" stroke-width="1" fill="none"/></svg>
<div class=a style="left:37px;top:541px;width:932px;height:4px;background:#eef0f4"></div>
<div class=a style="left:0px;top:545px;width:1024px;height:1px;background:#e8ecf2"></div>
<div class=a style="left:0px;top:546px;width:1024px;height:1px;background:#fbfbf8"></div>
<div class=a style="left:0px;top:547px;width:1024px;height:1px;background:#aaa698"></div>
<div class=a style="left:0px;top:548px;width:1024px;height:21px;background:linear-gradient(#efece0,#ebe8d8)"></div>
<div class=a style="left:0px;top:569px;width:1024px;height:1px;background:#f4f2ea"></div>
<div style="position:absolute;left:2.00px;top:555px;font:normal 11px 'Liberation Sans', sans-serif;line-height:11px;color:#000;white-space:nowrap;transform-origin:0 0;transform:scaleX(1.0139);">http://www.forum-volgograd.ru/openx/www/delivery/ck.php?oaparams=2__bannerid=13__zoneid=23__sou</div>
<div class=a style="left:527px;top:549px;width:1px;height:19px;background:#aca899"></div>
<div class=a style="left:528px;top:549px;width:1px;height:19px;background:#fff"></div>
<div class=a style="left:551px;top:549px;width:1px;height:19px;background:#aca899"></div>
<div class=a style="left:552px;top:549px;width:1px;height:19px;background:#fff"></div>
<div class=a style="left:575px;top:549px;width:1px;height:19px;background:#aca899"></div>
<div class=a style="left:576px;top:549px;width:1px;height:19px;background:#fff"></div>
<div class=a style="left:599px;top:549px;width:1px;height:19px;background:#aca899"></div>
<div class=a style="left:600px;top:549px;width:1px;height:19px;background:#fff"></div>
<div class=a style="left:623px;top:549px;width:1px;height:19px;background:#aca899"></div>
<div class=a style="left:624px;top:549px;width:1px;height:19px;background:#fff"></div>
<div class=a style="left:647px;top:549px;width:1px;height:19px;background:#aca899"></div>
<div class=a style="left:648px;top:549px;width:1px;height:19px;background:#fff"></div>
<div class=a style="left:670px;top:549px;width:1px;height:19px;background:#aca899"></div>
<div class=a style="left:671px;top:549px;width:1px;height:19px;background:#fff"></div>
<div class=a style="left:881px;top:549px;width:1px;height:19px;background:#aca899"></div>
<div class=a style="left:882px;top:549px;width:1px;height:19px;background:#fff"></div>
<div class=a style="left:924px;top:549px;width:1px;height:19px;background:#aca899"></div>
<div class=a style="left:925px;top:549px;width:1px;height:19px;background:#fff"></div>
<svg class=a style="left:676px;top:552px" width="16" height="16" viewBox="0 0 16 16"><circle cx="8" cy="8" r="7.3" fill="#2a78d0"/><path d="M3 4 C6 3 7 6 5 8 C4 10 6 12 5 14 C3 12 1.5 9 3 4Z M9 2 C12 3 14 6 13 9 C11 9 10 7 9 5Z M8 11 C10 10 12 11 11 14 C9 14 8 13 8 11Z" fill="#3ab030"/></svg>
<div style="position:absolute;left:695.50px;top:555px;font:normal 11px 'Liberation Sans', sans-serif;line-height:11px;color:#000;white-space:nowrap;transform-origin:0 0;transform:scaleX(1.0071);">Интернет</div>
<svg class=a style="left:889px;top:551px" width="18" height="17" viewBox="0 0 18 17"><path d="M2 9 L6 5 L6 7 C10 7 11 10 9 12 C9 10 8 9 6 9 L6 11Z" fill="#a8a8a8"/><rect x="9" y="9" width="7" height="6" fill="#909090"/><path d="M10.5 9 V7 A2 2 0 0 1 14.5 7 V9" stroke="#909090" stroke-width="1.2" fill="none"/></svg>
<svg class=a style="left:912px;top:558px" width="7" height="4"><path d="M0 0 H7 L3.5 4Z" fill="#000"/></svg>
<svg class=a style="left:935px;top:551px" width="14" height="15" viewBox="0 0 14 15"><circle cx="6" cy="6" r="4.8" fill="#d8e8fa" stroke="#3a5a8a" stroke-width="1.3"/><path d="M3.5 6 H8.5 M6 3.5 V8.5" stroke="#1a60c0" stroke-width="1.6"/><path d="M9 9 L13 13.5" stroke="#5a4a3a" stroke-width="2.2"/></svg>
<div style="position:absolute;left:951.00px;top:555px;font:normal 11px 'Liberation Sans', sans-serif;line-height:11px;color:#000;white-space:nowrap;transform-origin:0 0;transform:scaleX(0.9875);">100%</div>
<svg class=a style="left:994px;top:558px" width="7" height="4"><path d="M0 0 H7 L3.5 4Z" fill="#000"/></svg>
<div class=a style="left:1019px;top:558px;width:2px;height:2px;background:#c8c4b4"></div>
<div class=a style="left:1016px;top:561px;width:2px;height:2px;background:#c8c4b4"></div>
<div class=a style="left:1019px;top:561px;width:2px;height:2px;background:#c8c4b4"></div>
<div class=a style="left:1013px;top:564px;width:2px;height:2px;background:#c8c4b4"></div>
<div class=a style="left:1016px;top:564px;width:2px;height:2px;background:#c8c4b4"></div>
<div class=a style="left:1019px;top:564px;width:2px;height:2px;background:#c8c4b4"></div>
<div class=a style="left:0px;top:570px;width:1024px;height:4px;background:linear-gradient(#5a8cf0,#2a62e0)"></div>
<div class=a style="left:0px;top:570px;width:93px;height:4px;background:linear-gradient(#78c878,#3a9a3a)"></div>
<div class=a style="left:895px;top:570px;width:129px;height:4px;background:linear-gradient(#38b8f8,#10a0f0)"></div>
</body></html>
